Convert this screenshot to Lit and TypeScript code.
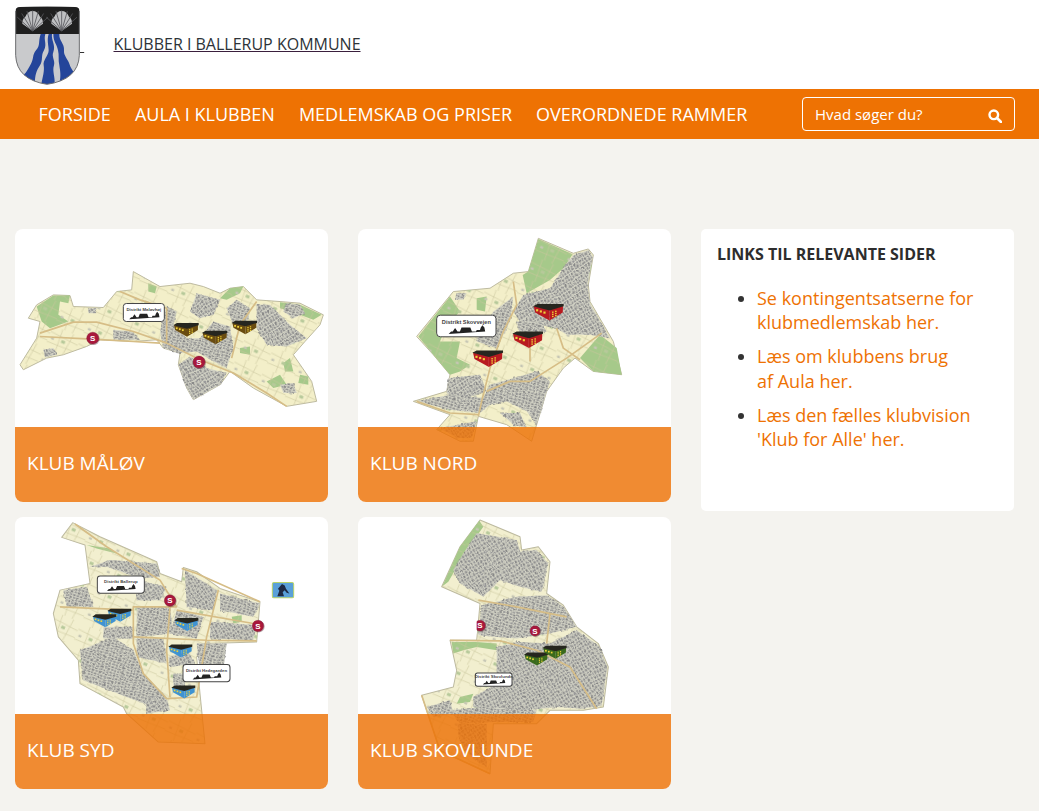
import { LitElement, html, css, svg } from "lit";
import { customElement } from "lit/decorators.js";

type Pt = number[];
interface Building { x: number; y: number; w: number; wall: string; }
interface Sign { x: number; y: number; w: number; h: number; text: string; }
interface MapData {
  title: string;
  box: string;
  outline: string;
  land: string;
  greens: string[];
  urban: string[];
  roads: string[];
  buildings: Building[];
  stations: Pt[];
  signs: Sign[];
  extra?: boolean;
  cut?: boolean;
}

const MAPS: MapData[] = [
  {
    title: "KLUB MÅLØV",
    box: "45 12 939 819",
    land: "#f3efc9",
    outline: "400,140 480,185 570,175 610,185 660,205 690,190 730,185 770,225 840,230 900,235 970,270 960,300 915,350 880,390 935,470 950,530 860,545 760,490 690,440 660,480 580,525 560,490 535,420 540,385 490,370 470,345 400,350 300,345 260,365 190,390 140,400 70,435 60,420 110,340 120,290 85,280 110,240 160,210 210,212 220,245 310,248 350,200 395,195",
    greens: [
      "110,245 160,212 210,212 205,235 180,230 175,270 205,290 150,310 125,290",
      "660,220 690,190 730,185 720,205 680,225",
      "840,232 900,240 965,270 940,285 880,262 840,250",
      "800,470 840,450 860,480 820,490",
      "850,415 870,400 880,440 855,440",
      "720,370 750,365 750,390 720,385",
      "445,175 470,185 465,205 445,200",
      "900,450 925,455 925,480 895,475",
    ],
    urban: [
      "590,205 660,225 640,270 600,280 570,260",
      "680,250 710,225 750,250 745,285 700,300",
      "770,240 810,240 870,300 920,340 860,365 800,360 770,310",
      "500,245 530,260 520,300 560,340 600,340 640,290 690,305 700,370 680,430 640,410 590,380 540,385 490,370 480,320",
      "535,420 570,395 620,430 680,445 660,480 580,525 560,490",
      "340,315 395,320 420,345 340,345",
      "130,375 160,370 170,390 135,398",
      "840,480 880,475 890,505 850,505",
      "265,250 290,250 285,265 265,265",
      "860,235 900,240 915,265 880,280 850,260",
    ],
    roads: [
      "120,325 220,292 290,292 400,320 500,355 600,405 700,445 800,505 860,545",
      "120,335 260,342 400,350 480,355",
      "360,200 420,225 500,250 500,350",
      "770,230 720,300 695,400",
    ],
    buildings: [
      { x: 558, y: 315, w: 76, wall: "#6a4c10" },
      { x: 644, y: 338, w: 76, wall: "#6a4c10" },
      { x: 733, y: 308, w: 76, wall: "#6a4c10" },
    ],
    stations: [[278, 340, 18], [597, 412, 18]],
    signs: [{ x: 370, y: 236, w: 123, h: 54, text: "Distrikt Måløvhøj" }],
  },
  {
    title: "KLUB NORD",
    box: "24 12 939 819",
    land: "#f3efc9",
    outline: "565,40 670,85 715,72 730,90 715,180 720,230 790,350 815,450 730,440 675,400 640,430 590,500 545,650 470,600 385,575 370,650 330,650 260,615 300,570 190,530 290,500 300,450 250,390 200,335 310,200 420,190 490,145 535,140",
    greens: [
      "565,42 668,88 640,130 600,165 530,205 518,150 535,140",
      "205,335 300,215 330,260 290,300 270,350 330,350 320,400 360,420 330,440 300,450 250,390",
      "690,400 750,330 800,370 815,450 730,440",
      "380,220 410,215 405,260 380,255",
      "700,120 725,120 715,160 695,150",
    ],
    urban: [
      "640,130 670,90 715,75 728,95 712,180 720,235 780,340 720,330 650,330 620,310 570,300 510,290 490,260 520,210 600,190",
      "430,260 490,215 480,290 440,370 380,350 390,320",
      "295,460 390,450 410,500 320,530 290,505",
      "200,530 300,510 400,520 420,480 560,440 600,470 590,500 560,600 530,560 470,530 420,540 390,565 300,555",
      "270,610 380,590 365,640 320,640",
      "500,290 570,290 590,320 510,330",
      "450,565 510,565 530,610 490,600",
      "320,205 350,205 340,225 315,225",
    ],
    roads: [
      "490,170 500,240 460,320 420,430 395,530 385,575",
      "200,530 300,565 385,570",
      "410,500 480,470 540,470 650,400 755,325",
      "620,310 640,370 690,405",
      "540,360 540,410",
    ],
    buildings: [
      { x: 595, y: 262, w: 92, wall: "#b81a20" },
      { x: 533, y: 345, w: 92, wall: "#b81a20" },
      { x: 413, y: 402, w: 92, wall: "#b81a20" },
    ],
    stations: [],
    signs: [{ x: 260, y: 271, w: 178, h: 65, text: "Distrikt Skovvejen" }],
  },
  {
    title: "KLUB SYD",
    box: "45 21 939 816",
    land: "#f2efcf",
    outline: "218,38 300,80 470,155 480,190 545,215 550,172 590,185 660,235 780,275 770,395 620,400 590,440 600,550 615,700 475,695 380,610 370,590 240,520 235,450 175,380 160,310 180,240 270,220 255,105 185,82",
    greens: [
      "260,105 330,115 350,130 290,115",
      "305,395 340,390 340,415 310,415",
      "695,320 725,315 725,335 700,340",
    ],
    urban: [
      "270,170 330,150 470,160 480,200 420,205 320,170",
      "410,290 510,290 520,370 410,380",
      "555,180 650,240 640,300 560,290",
      "660,250 780,280 760,320 660,300",
      "630,335 770,345 760,390 630,385",
      "530,300 610,320 590,385 510,370",
      "410,385 490,385 500,460 410,440",
      "240,420 340,380 400,420 430,490 500,560 460,590 380,560 250,510",
      "505,440 560,420 585,460 510,470",
      "190,240 260,230 280,290 200,290",
      "440,560 500,560 510,600 440,610",
      "590,400 680,400 670,480 600,490",
      "310,350 400,350 400,385 310,385",
      "520,490 555,490 555,540 520,540",
      "410,210 500,230 480,270 410,270",
    ],
    roads: [
      "225,42 320,110 480,210 530,290",
      "545,175 590,190 780,275",
      "655,240 620,380 590,560 500,565 430,490 400,400 400,290 530,290",
      "400,380 620,390 770,392",
      "510,290 500,420 510,560",
      "530,300 760,340",
      "180,290 400,300",
    ],
    buildings: [
      { x: 358, y: 315, w: 72, wall: "#3f93d2" },
      { x: 313, y: 332, w: 72, wall: "#3f93d2" },
      { x: 559, y: 343, w: 72, wall: "#3f93d2" },
      { x: 541, y: 422, w: 72, wall: "#3f93d2" },
      { x: 550, y: 545, w: 72, wall: "#3f93d2" },
    ],
    stations: [[510, 271, 17], [774, 347, 17]],
    signs: [
      { x: 292, y: 198, w: 141, h: 51, text: "Distrikt Ballerup" },
      { x: 549, y: 463, w: 141, h: 51, text: "Distrikt Hedegården" },
    ],
    extra: true,
  },
  {
    title: "KLUB SKOVLUNDE",
    box: "24 21 939 816",
    land: "#f2efcf",
    outline: "390,30 510,80 515,120 565,110 600,155 590,250 640,285 680,350 745,400 775,470 760,590 700,600 600,600 560,640 430,640 420,790 270,720 215,555 310,530 320,480 300,390 380,390 390,280 275,230 330,110",
    greens: [
      "388,32 400,50 350,120 295,215 277,228 330,110",
      "305,395 380,395 440,400 440,420 380,410 340,420 310,430",
      "330,560 370,550 360,575 320,580",
    ],
    urban: [
      "380,70 500,90 510,125 560,120 595,160 575,245 510,230 450,210 400,260 330,220 310,180 340,130",
      "395,285 500,260 590,255 640,290 680,350 600,370 500,385 440,380 385,375",
      "440,410 510,395 600,400 680,360 745,405 772,470 755,585 700,595 620,590 530,600 440,600 370,590 370,560 440,520",
      "300,600 400,590 560,600 550,635 430,635 330,640",
      "320,640 410,640 410,770 340,720",
      "230,590 300,570 310,610 250,620",
    ],
    roads: [
      "385,270 500,290 650,320",
      "300,390 450,392 560,420 660,470 740,595",
      "600,310 590,400",
      "215,555 270,720 420,790",
    ],
    buildings: [
      { x: 558, y: 446, w: 72, wall: "#3a6a1c" },
      { x: 614, y: 426, w: 72, wall: "#3a6a1c" },
    ],
    stations: [[390, 346, 16], [555, 362, 15]],
    signs: [{ x: 376, y: 488, w: 110, h: 40, text: "Distrikt Skovlunde" }],
    cut: true,
  },
];

function building(b: Building) {
  const w = b.w;
  const h = w * 0.54;
  const mx = b.x + w * 0.04;
  const l = b.x - w / 2;
  const r = b.x + w / 2;
  const t = b.y - h / 2;
  const my = t + h * 0.34;
  const bot = t + h;
  const wins = [0.1, 0.22, 0.34].map(
    (f, i) => svg`<rect class="win" x=${l + f * w} y=${t + h * (0.32 + i * 0.07)} width=${w * 0.07} height=${h * 0.13}></rect>`
  );
  const wins2 = [0.62, 0.72].flatMap((f, i) =>
    [0, 1, 2].map(
      (j) => svg`<rect class="win" x=${l + f * w} y=${t + h * (0.46 + j * 0.13 - i * 0.05)} width=${w * 0.05} height=${h * 0.08}></rect>`
    )
  );
  return svg`
    <polygon fill=${b.wall} points="${l + 2},${t + 6} ${mx},${my} ${mx},${bot} ${l + w * 0.07},${bot - h * 0.48}"></polygon>
    <polygon fill=${b.wall} points="${mx},${my} ${r - 2},${t + 6} ${r - w * 0.03},${bot - h * 0.48} ${mx},${bot}"></polygon>
    ${wins}${wins2}
    <polygon class="roof" points="${l},${t + 7} ${l + w * 0.14},${t} ${r},${t} ${r},${t + 7} ${mx},${my + 3}"></polygon>
  `;
}

function station(p: Pt) {
  return svg`
    <circle class="st-shadow" cx=${p[0] + 2} cy=${p[1] + 2} r=${p[2] + 1}></circle>
    <circle class="st" cx=${p[0]} cy=${p[1]} r=${p[2]}></circle>
    <text class="st-t" x=${p[0]} y=${p[1] + 8}>S</text>
  `;
}

function sign(s: Sign) {
  const u = s.h / 54;
  const cx = s.x + s.w / 2;
  const base = s.y + s.h - 7 * u;
  const sky = `M${cx - 44 * u},${base} l${6 * u},${-6 * u} l${4 * u},0 l${6 * u},${-9 * u} l${6 * u},${9 * u} l${6 * u},0 l${4 * u},${-10 * u} l${22 * u},0 l${4 * u},${10 * u} l${10 * u},0 l${2 * u},${-4 * u} l${8 * u},0 l${2 * u},${-6 * u} l${4 * u},${-6 * u} l${5 * u},${6 * u} l${2 * u},${10 * u} z`;
  return svg`
    <rect class="sign" x=${s.x} y=${s.y} width=${s.w} height=${s.h} rx=${9 * u}></rect>
    <text class="sign-t" x=${cx} y=${s.y + 22 * u} font-size=${s.w > 170 ? 17 : 13}>${s.text}</text>
    <path class="sky" d=${sky}></path>
  `;
}

function mapSvg(m: MapData) {
  return html`<svg class="map" viewBox=${m.box} preserveAspectRatio="none" aria-hidden="true">
    <g filter="url(#soft)">
      <polygon class="edge" fill=${m.land} points=${m.outline}></polygon>
      ${m.greens.map((g) => svg`<polygon class="green" points=${g}></polygon>`)}
      <polygon class="speck" fill="url(#fields)" points=${m.outline}></polygon>
      ${m.urban.map(
        (g, i) => svg`<polygon class="urban-base" points=${g}></polygon>
          <polygon filter="url(#warp)" fill=${i % 2 ? "url(#housesA)" : "url(#housesB)"} points=${g}></polygon>`
      )}
      ${m.roads.map((g) => svg`<polyline class="road" points=${g}></polyline>`)}
    </g>
    ${m.stations.map(station)}
    ${m.cut ? svg`<rect x="360" y="325" width="20" height="45" fill="#fff"></rect>` : ""}
    ${m.buildings.map(building)}
    ${m.signs.map(sign)}
    ${m.extra
      ? svg`<rect x="817" y="217" width="64" height="46" rx="5" fill="#5aa0d8" stroke="#b9d36a" stroke-width="3"></rect>
            <path d="M832,258 l6,-16 l-4,-6 l12,-14 l8,4 l4,10 l10,14 l-8,-2 l-6,-8 l-6,6 l4,12 z" fill="#1e2a44"></path>`
      : ""}
  </svg>`;
}

const SHELL = (cx: number, cy: number) =>
  `M${cx},${cy} L${cx - 31},${cy - 22} Q${cx - 32},${cy - 36} ${cx - 22},${cy - 43} Q${cx - 15},${cy - 60} ${cx},${cy - 60} Q${cx + 15},${cy - 60} ${cx + 22},${cy - 43} Q${cx + 32},${cy - 36} ${cx + 31},${cy - 22} Z`;

function shell(cx: number) {
  const cy = 92;
  const ribs = [-48, -32, -16, 0, 16, 32, 48].map((a) => {
    const rad = (a * Math.PI) / 180;
    return svg`<line class="rib" x1=${cx} y1=${cy} x2=${cx + Math.sin(rad) * 62} y2=${cy - Math.cos(rad) * 62}></line>`;
  });
  return svg`
    <path class="shell" d=${SHELL(cx, cy)}></path>
    ${ribs}
  `;
}

@customElement("app-root")
export class AppRoot extends LitElement {
  static styles = css`
    :host {
      display: block;
      min-height: 811px;
      background: #f4f3ef;
      font-family: "Open Sans", "Liberation Sans", sans-serif;
      color: #333;
    }
    .defs { display: block; width: 0; height: 0; overflow: hidden; }
    .top {
      height: 89px;
      background: #fff;
      display: flex;
      align-items: center;
      padding-left: 15px;
      box-sizing: border-box;
    }
    .crest-link {
      display: flex;
      align-items: center;
      color: #333;
      text-decoration: underline;
      width: 98.5px;
      font-size: 16px;
    }
    .crest { display: block; width: 65px; height: 79px; flex: none; margin-top: 1px; }
    .site {
      color: #2d3338;
      font-size: 16px;
      margin-top: -1px;
      text-decoration: underline;
      text-decoration-color: #3a1f3d;
    }
    .nav {
      height: 50px;
      background: #ee7203;
      display: flex;
      align-items: center;
      padding: 0 24px 0 38.5px;
      gap: 24px;
      box-sizing: border-box;
    }
    .nav a {
      color: #fff;
      font-size: 18px;
      text-decoration: none;
      white-space: nowrap;
    }
    .search {
      margin-left: auto;
      width: 213px;
      height: 34px;
      box-sizing: border-box;
      border: 1px solid #fff;
      border-radius: 4px;
      display: flex;
      align-items: center;
      justify-content: space-between;
      padding: 0 12.5px 0 12px;
      color: #fff;
      font-size: 15px;
    }
    .search svg { width: 14px; height: 14px; display: block; margin-top: 3px; }
    .content {
      display: flex;
      align-items: flex-start;
      padding: 90px 25px 0 15px;
      gap: 30px;
    }
    .grid {
      display: grid;
      grid-template-columns: 313px 313px;
      gap: 15px 30px;
    }
    .card {
      position: relative;
      display: block;
      width: 313px;
      height: 272.5px;
      background: #fff;
      border-radius: 8px;
      overflow: hidden;
      text-decoration: none;
    }
    .map { display: block; width: 100%; height: 100%; }
    .edge { stroke: #bdbaa0; stroke-width: 3; stroke-linejoin: round; }
    .green { fill: #a6c98a; }
    .urban-base { fill: #d4d4c6; }
    .road { fill: none; stroke: #d6bd86; stroke-width: 5; stroke-linejoin: round; }
    .roof { fill: #26261f; }
    .win { fill: #efd23a; }
    .st { fill: #a8183c; stroke: #7a1030; stroke-width: 1; }
    .st-shadow { fill: rgba(70, 20, 30, 0.35); }
    .st-t {
      fill: #fff;
      font-family: "Liberation Sans", sans-serif;
      font-weight: 700;
      font-size: 24px;
      text-anchor: middle;
    }
    .sign { fill: #fff; stroke: #444; stroke-width: 3; }
    .sign-t {
      fill: #444;
      font-family: "Liberation Sans", sans-serif;
      font-weight: 700;
      text-anchor: middle;
    }
    .sky { fill: #222; }
    .label {
      position: absolute;
      left: 0;
      right: 0;
      bottom: 0;
      height: 75px;
      background: rgba(237, 112, 2, 0.81);
      color: #fff;
      font-size: 19px;
      line-height: 72px;
      padding-left: 12px;
    }
    .panel {
      width: 313px;
      height: 282px;
      box-sizing: border-box;
      background: #fff;
      border-radius: 5px;
      padding: 14px 16px;
    }
    .panel h2 {
      margin: 0;
      font-size: 16px;
      line-height: 22px;
      font-weight: 700;
      color: #2d2d2d;
    }
    .panel ul {
      margin: 21px 0 0;
      padding: 0 0 0 40px;
      display: flex;
      flex-direction: column;
      gap: 9.8px;
    }
    .panel li { color: #333; font-size: 18px; line-height: 24.3px; }
    .panel li a { color: #ee7203; text-decoration: none; }
    .crest .black { fill: #1f1f1f; }
    .crest .silver { fill: #c9cacc; }
    .crest .blue { fill: #24459a; }
    .crest .rim { fill: none; stroke: #6d6e70; stroke-width: 3; }
    .crest .shell { fill: #bfc0c2; }
    .crest .rib { stroke: #55565a; stroke-width: 2.5; }
  `;

  render() {
    return html`
      <svg class="defs" aria-hidden="true">
        <defs>
          <filter id="soft" x="-2%" y="-2%" width="104%" height="104%">
            <feGaussianBlur stdDeviation="1.4"></feGaussianBlur>
          </filter>
          <filter id="warp" x="0" y="0" width="100%" height="100%">
            <feTurbulence type="fractalNoise" baseFrequency="0.035" numOctaves="2" seed="7" result="n"></feTurbulence>
            <feDisplacementMap in="SourceGraphic" in2="n" scale="14" xChannelSelector="R" yChannelSelector="G"></feDisplacementMap>
          </filter>
          <pattern id="housesA" width="22" height="17" patternUnits="userSpaceOnUse" patternTransform="rotate(18)">
            <rect x="1" y="1" width="8" height="5" fill="#8a8a8a"></rect>
            <rect x="12" y="1" width="8" height="5" fill="#969696"></rect>
            <rect x="3" y="9" width="7" height="5" fill="#969696"></rect>
            <rect x="13" y="9" width="8" height="6" fill="#858585"></rect>
          </pattern>
          <pattern id="housesB" width="19" height="21" patternUnits="userSpaceOnUse" patternTransform="rotate(-32)">
            <rect x="1" y="1" width="6" height="8" fill="#8d8d8d"></rect>
            <rect x="10" y="2" width="7" height="7" fill="#989898"></rect>
            <rect x="2" y="12" width="6" height="7" fill="#989898"></rect>
            <rect x="11" y="12" width="6" height="8" fill="#878787"></rect>
          </pattern>
          <pattern id="fields" width="90" height="70" patternUnits="userSpaceOnUse" patternTransform="rotate(24)">
            <path d="M0,20 L90,26 M30,0 L36,70 M66,0 L60,70 M0,52 L90,48" fill="none" stroke="#c9c69c" stroke-width="1.6"></path>
            <rect x="40" y="30" width="12" height="9" fill="#b7c99a"></rect>
            <rect x="8" y="34" width="9" height="7" fill="#c6c6b4"></rect>
          </pattern>
        </defs>
      </svg>
      <header class="top">
        <a class="crest-link" href="#">
          <svg class="crest" viewBox="45 18 195 235" aria-hidden="true">
            <defs>
              <clipPath id="shield"><path d="M47,32 Q46,21 60,20 Q140,16 225,20 Q239,21 238,32 L238,165 Q235,238 141,252 Q50,238 46,165 Z"></path></clipPath>
            </defs>
            <g clip-path="url(#shield)">
              <rect class="silver" x="45" y="18" width="195" height="235"></rect>
              <rect class="black" x="45" y="18" width="195" height="83"></rect>
              <path class="blue" d="M122,101 L136,101 C130,120 142,130 132,150 C122,165 130,180 120,195 C110,210 104,225 105,250 L70,225 C82,212 86,203 93,190 C102,175 96,165 108,150 C122,135 114,125 122,101 Z"></path>
              <path class="blue" d="M146,101 L156,101 C153,120 168,135 160,155 C154,170 166,180 162,195 C156,212 166,230 164,252 L124,252 C128,230 134,212 131,195 C128,180 146,165 146,150 C146,135 140,120 146,101 Z"></path>
              <path class="blue" d="M160,101 L178,101 C176,120 194,130 192,150 C190,165 204,178 208,190 C212,202 216,208 222,216 L178,250 C184,225 180,210 178,195 C174,180 178,165 174,150 C170,130 160,125 160,101 Z"></path>
            </g>
            <path class="rim" d="M47,32 L47,165 Q50,238 141,252 Q235,238 238,165 L238,32"></path>
            ${shell(98)}${shell(185)}
          </svg>
          <span>&nbsp;</span>
        </a>
        <a class="site" href="#">KLUBBER I BALLERUP KOMMUNE</a>
      </header>
      <nav class="nav">
        <a href="#">FORSIDE</a>
        <a href="#">AULA I KLUBBEN</a>
        <a href="#">MEDLEMSKAB OG PRISER</a>
        <a href="#">OVERORDNEDE RAMMER</a>
        <div class="search">
          <span>Hvad søger du?</span>
          <svg viewBox="0 0 14 14" aria-hidden="true">
            <circle cx="5.8" cy="5.8" r="4.3" fill="none" stroke="#fff" stroke-width="2.4"></circle>
            <line x1="9" y1="9" x2="13" y2="13" stroke="#fff" stroke-width="2.6" stroke-linecap="round"></line>
          </svg>
        </div>
      </nav>
      <main class="content">
        <section class="grid">
          ${MAPS.map(
            (m) => html`<a class="card" href="#">
              ${mapSvg(m)}
              <div class="label">${m.title}</div>
            </a>`
          )}
        </section>
        <aside class="panel">
          <h2>LINKS TIL RELEVANTE SIDER</h2>
          <ul>
            <li><a href="#">Se kontingentsatserne for klubmedlemskab her.</a></li>
            <li><a href="#">Læs om klubbens brug af&nbsp;Aula her.</a></li>
            <li><a href="#">Læs den fælles klubvision 'Klub for Alle' her.</a></li>
          </ul>
        </aside>
      </main>
    `;
  }
}
